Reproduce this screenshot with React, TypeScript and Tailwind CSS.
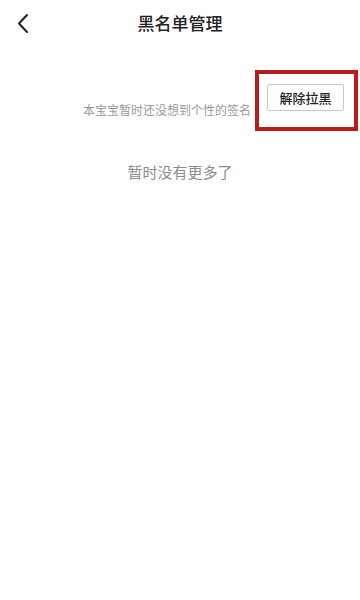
const font = 'font-["Noto_Sans_CJK_SC","Noto_Sans",sans-serif]';

export default function App() {
  return (
    <div className={`w-[360px] h-[600px] bg-white ${font} overflow-hidden`}>
      {/* Header */}
      <div className="relative h-[48px] flex items-center justify-center">
        <button className="absolute left-[16px] top-[13px] text-[#222]">
          <svg width="14" height="21" viewBox="0 0 14 21" fill="none">
            <path d="M11 2 L3 10.5 L11 19" stroke="currentColor" strokeWidth="2" strokeLinecap="round" strokeLinejoin="round" />
          </svg>
        </button>
        <h1 className="text-[17px] leading-none font-medium text-[#222] -mt-[3px]">黑名单管理</h1>
      </div>

      {/* Blacklist row */}
      <div className="flex items-start justify-end pr-[2px] mt-[22px]">
        <span className="text-[12px] leading-none text-[#9a9a9a] mt-[34px] mr-[4px]">
          本宝宝暂时还没想到个性的签名
        </span>
        {/* highlight frame */}
        <div className="border-4 border-[#b81c1c] pl-[8px] pr-[10px] pt-[10px] pb-[16px]">
          <button className="w-[77px] h-[27px] border border-[#c8c8c8] rounded-[2px] text-[13px] leading-none font-medium text-[#222] bg-white">
            解除拉黑
          </button>
        </div>
      </div>

      {/* Empty footer */}
      <p className="text-center text-[15px] leading-none text-[#8c8c8c] mt-[33px]">暂时没有更多了</p>
    </div>
  );
}
